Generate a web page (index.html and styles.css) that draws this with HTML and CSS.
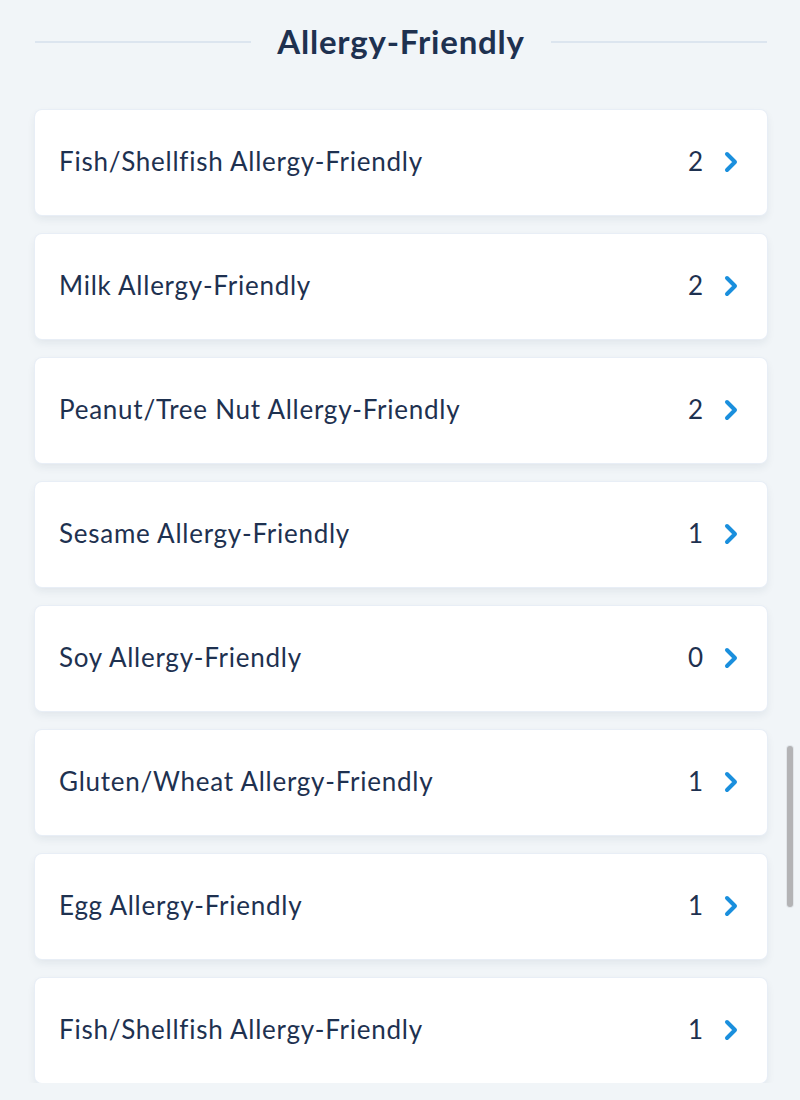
FILE: index.html
```html
<!DOCTYPE html>
<html>
<head>
<meta charset="utf-8">
<link rel="stylesheet" href="styles.css">
</head>
<body>
<div class="page">
  <div class="section-head">
    <span class="rule"></span>
    <h2 class="title">Allergy-Friendly</h2>
    <span class="rule"></span>
  </div>
  <ul class="list">
    <li class="card"><span class="label">Fish/Shellfish Allergy-Friendly</span><span class="count">2</span><svg class="chev" viewBox="0 0 16 22"><path d="M4 3 L12 11 L4 19" /></svg></li>
    <li class="card"><span class="label">Milk Allergy-Friendly</span><span class="count">2</span><svg class="chev" viewBox="0 0 16 22"><path d="M4 3 L12 11 L4 19" /></svg></li>
    <li class="card"><span class="label">Peanut/Tree Nut Allergy-Friendly</span><span class="count">2</span><svg class="chev" viewBox="0 0 16 22"><path d="M4 3 L12 11 L4 19" /></svg></li>
    <li class="card"><span class="label">Sesame Allergy-Friendly</span><span class="count">1</span><svg class="chev" viewBox="0 0 16 22"><path d="M4 3 L12 11 L4 19" /></svg></li>
    <li class="card"><span class="label">Soy Allergy-Friendly</span><span class="count">0</span><svg class="chev" viewBox="0 0 16 22"><path d="M4 3 L12 11 L4 19" /></svg></li>
    <li class="card"><span class="label">Gluten/Wheat Allergy-Friendly</span><span class="count">1</span><svg class="chev" viewBox="0 0 16 22"><path d="M4 3 L12 11 L4 19" /></svg></li>
    <li class="card"><span class="label">Egg Allergy-Friendly</span><span class="count">1</span><svg class="chev" viewBox="0 0 16 22"><path d="M4 3 L12 11 L4 19" /></svg></li>
    <li class="card"><span class="label">Fish/Shellfish Allergy-Friendly</span><span class="count">1</span><svg class="chev" viewBox="0 0 16 22"><path d="M4 3 L12 11 L4 19" /></svg></li>
  </ul>
</div>
<div class="scrollbar"></div>
</body>
</html>
```
FILE: styles.css
```css
html, body {
  margin: 0;
  padding: 0;
  background: #f1f5f8;
  font-family: "Lato", "Open Sans", sans-serif;
  color: #1e3150;
  overflow: hidden;
}
.page {
  padding: 0 33px 0 35px;
}
.section-head {
  display: flex;
  align-items: center;
  gap: 26px;
  height: 84px;
  margin-bottom: 26px;
}
.rule {
  flex: 1;
  height: 2px;
  background: #dce5ef;
}
.title {
  margin: 0;
  font-size: 33px;
  font-weight: 700;
  color: #1e3150;
  letter-spacing: 0.8px;
  padding-bottom: 2px;
}
.list {
  list-style: none;
  margin: 0;
  padding: 0;
  display: flex;
  flex-direction: column;
  gap: 19px;
}
.card {
  background: #fff;
  height: 105px;
  box-sizing: border-box;
  border-radius: 7px;
  box-shadow: 0 0 0 1px #e8eef6, 0 4px 8px rgba(30, 49, 80, 0.08);
  display: flex;
  align-items: center;
  padding: 0 28px 3px 24px;
  font-size: 26px;
}
.label {
  flex: 1;
  letter-spacing: 0.75px;
}
.count {
  margin-right: 20px;
}
.chev {
  width: 16px;
  height: 22px;
  margin-top: 2px;
}
.chev path {
  fill: none;
  stroke: #1a8fdd;
  stroke-width: 4;
  stroke-linecap: round;
  stroke-linejoin: round;
}
.scrollbar {
  position: fixed;
  left: 787px;
  top: 746px;
  width: 6px;
  height: 161px;
  border-radius: 3px;
  background: #b3b3b5;
  box-shadow: 0 0 0 1px #e2e6ea;
}
```
